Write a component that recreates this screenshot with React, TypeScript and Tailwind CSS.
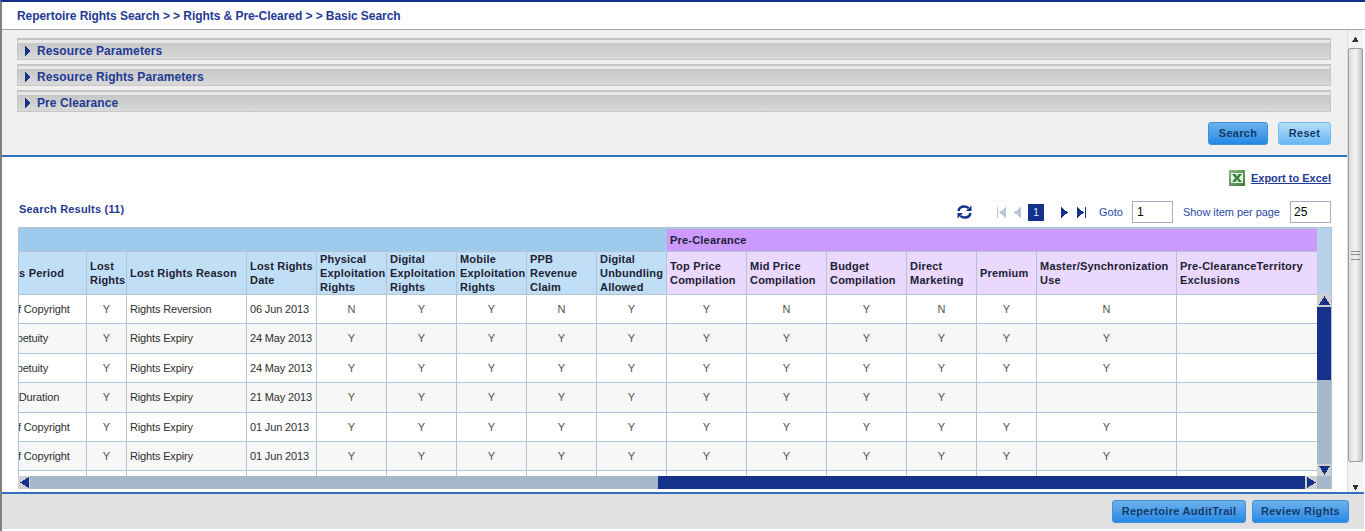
import React from "react";

const navy = "#16318a";

type Row = { period: string; offset: string; reason: string; date: string; a: string[]; b: string[] };

const rows: Row[] = [
  { period: "Life of Copyright", offset: "-ml-[27px]", reason: "Rights Reversion", date: "06 Jun 2013", a: ["N", "Y", "Y", "N", "Y"], b: ["Y", "N", "Y", "N", "Y", "N", ""] },
  { period: "Perpetuity", offset: "-ml-[19px]", reason: "Rights Expiry", date: "24 May 2013", a: ["Y", "Y", "Y", "Y", "Y"], b: ["Y", "Y", "Y", "Y", "Y", "Y", ""] },
  { period: "Perpetuity", offset: "-ml-[19px]", reason: "Rights Expiry", date: "24 May 2013", a: ["Y", "Y", "Y", "Y", "Y"], b: ["Y", "Y", "Y", "Y", "Y", "Y", ""] },
  { period: "Term Duration", offset: "-ml-[27px]", reason: "Rights Expiry", date: "21 May 2013", a: ["Y", "Y", "Y", "Y", "Y"], b: ["Y", "Y", "Y", "Y", "", "", ""] },
  { period: "Life of Copyright", offset: "-ml-[27px]", reason: "Rights Expiry", date: "01 Jun 2013", a: ["Y", "Y", "Y", "Y", "Y"], b: ["Y", "Y", "Y", "Y", "Y", "Y", ""] },
  { period: "Life of Copyright", offset: "-ml-[27px]", reason: "Rights Expiry", date: "01 Jun 2013", a: ["Y", "Y", "Y", "Y", "Y"], b: ["Y", "Y", "Y", "Y", "Y", "Y", ""] },
];

const heights = ["h-[29px]", "h-[30px]", "h-[29px]", "h-[30px]", "h-[29px]", "h-[29px]"];
const widths = [68, 40, 120, 70, 70, 70, 70, 70, 70, 80, 80, 80, 70, 60, 140, 141];

const blueHeads = ["Lost Rights", "Lost Rights Reason", "Lost Rights Date", "Physical Exploitation Rights", "Digital Exploitation Rights", "Mobile Exploitation Rights", "PPB Revenue Claim", "Digital Unbundling Allowed"];
const purpleHeads = ["Top Price Compilation", "Mid Price Compilation", "Budget Compilation", "Direct Marketing", "Premium", "Master/Synchronization Use", "Pre-ClearanceTerritory Exclusions"];

function Tri({ dir, size = 8, color = navy }: { dir: "l" | "r" | "u" | "d"; size?: number; color?: string }) {
  const pts = { r: "1,0 9,5 1,10", l: "9,0 1,5 9,10", u: "0,9 5,1 10,9", d: "0,1 5,9 10,1" }[dir];
  return (
    <svg width={size} height={size} viewBox="0 0 10 10" shapeRendering="crispEdges">
      <polygon points={pts} fill={color} />
    </svg>
  );
}

function Accordion({ title }: { title: string }) {
  return (
    <div className="h-[22px] border border-[#c6c6c6] bg-gradient-to-b from-[#c2c2c2] to-[#d9d9d9] relative flex items-center pl-[7px] pt-[3px]">
      <div className="absolute left-0 right-0 top-[1px] h-[3px] bg-[#e8e8e8]" />
      <svg width="6" height="10" viewBox="0 0 6 10" className="mr-[6px] relative" shapeRendering="crispEdges">
        <polygon points="0,0 6,5 0,10" fill={navy} />
      </svg>
      <span className="text-[12px] font-bold text-[#1f3a94] relative tracking-[0.1px]">{title}</span>
    </div>
  );
}

function BlueButton({ label, light, className }: { label: string; light?: boolean; className: string }) {
  return (
    <button
      className={`h-[23px] rounded-[3px] border text-[11px] font-bold text-[#123a6b] tracking-[0.3px] ${
        light ? "border-[#6fbcf5] bg-gradient-to-b from-[#b4dcfa] to-[#6ab8f3]" : "border-[#3f8fdc] bg-gradient-to-b from-[#6cb2ec] to-[#2288e6]"
      } ${className}`}
    >
      {label}
    </button>
  );
}

function ExcelIcon() {
  return (
    <svg width="16" height="16" viewBox="0 0 16 16" className="mr-[6px]">
      <defs>
        <linearGradient id="xl" x1="0" y1="0" x2="1" y2="1">
          <stop offset="0" stopColor="#8fb886" />
          <stop offset="1" stopColor="#3f7a3c" />
        </linearGradient>
      </defs>
      <rect x="0" y="0" width="16" height="16" fill="url(#xl)" />
      <rect x="2" y="3" width="12" height="10" fill="#e8f2e2" />
      <path d="M3 4h3.5L8 6.5 9.5 4H13l-3.2 4 3.2 4H9.5L8 9.5 6.5 12H3l3.2-4z" fill="#2f8a3a" />
    </svg>
  );
}

function RefreshIcon() {
  return (
    <svg width="15" height="14" viewBox="0 0 15 14" className="mr-[25px]">
      <path d="M1.5 6C2 3 4.5 1.5 7.5 1.5c1.8 0 3 .6 4 1.6" fill="none" stroke={navy} strokeWidth="2.4" />
      <polygon points="14.5,0.5 14.5,6 9,6" fill={navy} />
      <path d="M13.5 8c-.5 3-3 4.5-6 4.5-1.8 0-3-.6-4-1.6" fill="none" stroke={navy} strokeWidth="2.4" />
      <polygon points="0.5,13.5 0.5,8 6,8" fill={navy} />
    </svg>
  );
}

function Pager() {
  return (
    <div className="flex items-center h-[22px] text-[11px] text-[#2a4aa6]">
      <RefreshIcon />
      <svg width="9" height="11" viewBox="0 0 9 11" className="mr-[8px]" shapeRendering="crispEdges">
        <rect x="0" y="0" width="1" height="11" fill="#b9c5dc" />
        <polygon points="9,0 2,5.5 9,11" fill="#b9c5dc" />
      </svg>
      <svg width="7" height="11" viewBox="0 0 7 11" className="mr-[7px]" shapeRendering="crispEdges">
        <polygon points="7,0 0,5.5 7,11" fill="#b9c5dc" />
      </svg>
      <span className="w-[16px] h-[17px] bg-[#16318a] text-[#cfe3ff] text-[11px] flex items-center justify-center mr-[17px]">1</span>
      <svg width="7" height="11" viewBox="0 0 7 11" className="mr-[9px]" shapeRendering="crispEdges">
        <polygon points="0,0 7,5.5 0,11" fill={navy} />
      </svg>
      <svg width="9" height="11" viewBox="0 0 9 11" className="mr-[13px]" shapeRendering="crispEdges">
        <polygon points="0,0 7,5.5 0,11" fill={navy} />
        <rect x="8" y="0" width="1" height="11" fill={navy} />
      </svg>
      <span className="w-[23px] mr-[10px] whitespace-nowrap">Goto</span>
      <div className="w-[41px] h-[22px] border border-[#a8a8c8] text-[12px] text-black pl-[4px] leading-[20px] mr-[10px]">1</div>
      <span className="w-[97px] mr-[10px] whitespace-nowrap tracking-[-0.05px]">Show item per page</span>
      <div className="w-[41px] h-[22px] border border-[#a8a8c8] text-[12px] text-black pl-[3px] leading-[20px]">25</div>
    </div>
  );
}

function ScrollBtn({ dir, className }: { dir: "l" | "r" | "u" | "d"; className: string }) {
  return (
    <div className={`bg-[#cfcfcf] flex items-center justify-center shrink-0 ${className}`}>
      <Tri dir={dir} size={11} />
    </div>
  );
}

function ResultsTable() {
  const th = "border border-[#b2c4d8] text-left align-middle px-[3px] text-[11px] leading-[14px] font-bold text-[#1c2233] tracking-[0.2px]";
  const td = "border border-[#b2c4d8] text-[11px] text-[#2f2f2f] px-[3px] align-middle whitespace-nowrap tracking-[-0.15px]";
  const mark = "border border-[#b2c4d8] text-[11px] text-[#555] text-center align-middle";
  return (
    <div className="ml-[16px] w-[1314px] flex border-t border-r border-[#b2c4d8]">
      <div className="w-[1299px] flex flex-col">
        <div className="h-[248px] overflow-hidden">
          <table className="table-fixed border-collapse w-[1299px]">
            <colgroup>
              {widths.map((w, i) => (
                <col key={i} style={{ width: w }} />
              ))}
            </colgroup>
            <thead>
              <tr className="h-[23px]">
                <th colSpan={9} className="bg-[#9ccbee] border border-[#b2c4d8]" />
                <th colSpan={7} className={`${th} bg-[#cc99ff]`}>Pre-Clearance</th>
              </tr>
              <tr className="h-[43px]">
                <th className={`${th} bg-[#c0dff6] !px-0 overflow-hidden whitespace-nowrap`}>
                  <span className="block -ml-[29px]">Rights Period</span>
                </th>
                {blueHeads.map((h) => (
                  <th key={h} className={`${th} bg-[#c0dff6]`}>{h}</th>
                ))}
                {purpleHeads.map((h) => (
                  <th key={h} className={`${th} bg-[#ead8ff]`}>{h}</th>
                ))}
              </tr>
            </thead>
            <tbody>
              {rows.map((r, i) => (
                <tr key={i} className={`${heights[i]} ${i % 2 ? "bg-[#f7f7f7]" : "bg-white"}`}>
                  <td className={`${td} !px-0 overflow-hidden`}>
                    <span className={`block ${r.offset}`}>{r.period}</span>
                  </td>
                  <td className={mark}>Y</td>
                  <td className={td}>{r.reason}</td>
                  <td className={td}>{r.date}</td>
                  {r.a.map((v, j) => (
                    <td key={j} className={mark}>{v}</td>
                  ))}
                  {r.b.map((v, j) => (
                    <td key={j} className={mark}>{v}</td>
                  ))}
                </tr>
              ))}
              <tr className="h-[29px] bg-white">
                {widths.map((_, i) => (
                  <td key={i} className="border border-[#b2c4d8]" />
                ))}
              </tr>
            </tbody>
          </table>
        </div>
        <div className="h-[13px] flex bg-[#a5b7c9]">
          <ScrollBtn dir="l" className="w-[12px]" />
          <div className="w-[628px]" />
          <div className="w-[647px] bg-[#16318a]" />
          <ScrollBtn dir="r" className="w-[12px]" />
        </div>
      </div>
      <div className="w-[14px] flex flex-col bg-[#a5b7c9]">
        <div className="h-[66px] bg-[#b8d0e8] shrink-0" />
        <ScrollBtn dir="u" className="h-[13px]" />
        <div className="h-[73px] bg-[#16318a] shrink-0" />
        <div className="h-[84px] shrink-0" />
        <ScrollBtn dir="d" className="h-[12px]" />
      </div>
    </div>
  );
}

function PageScrollbar() {
  return (
    <div className="w-[16px] h-full bg-[#f1f1f1] border-l border-[#dcdcdc] flex flex-col items-center">
      <div className="h-[18px] flex items-center justify-center shrink-0">
        <Tri dir="u" size={7} color="#333" />
      </div>
      <div className="w-[15px] h-[414px] rounded-[2px] border border-[#9c9c9c] bg-gradient-to-r from-[#dcdcdc] via-[#f4f4f4] to-[#c4c4c4] flex items-center justify-center shrink-0">
        <div className="w-[9px] h-[9px] border-t border-b border-[#8a8a8a] flex items-center">
          <div className="w-full h-[3px] border-t border-[#8a8a8a]" />
        </div>
      </div>
      <div className="flex-1 flex items-center justify-center pt-[20px]">
        <Tri dir="d" size={7} color="#333" />
      </div>
    </div>
  );
}

export default function App() {
  return (
    <div className="w-[1365px] h-[531px] overflow-hidden bg-white border-t-2 border-l-2 border-t-[#16318a] border-l-[#7f7f7f] flex flex-col font-['Liberation_Sans',Arial,sans-serif]">
      <div className="h-[28px] shrink-0 border-b border-[#a5a5a5] pl-[15px] flex items-center text-[12px] tracking-[-0.06px] text-[#1f3a94] font-bold">
        Repertoire Rights Search &gt; &gt; Rights &amp; Pre-Cleared &gt; &gt; Basic Search
      </div>
      <div className="h-[462px] shrink-0 flex">
        <div className="w-[1345px] flex flex-col">
          <div className="h-[127px] shrink-0 bg-[#f0f0f0] border-b-2 border-[#2f6fbd] pt-[8px] pl-[15px] pr-[16px] flex flex-col gap-[4px]">
            <Accordion title="Resource Parameters" />
            <Accordion title="Resource Rights Parameters" />
            <Accordion title="Pre Clearance" />
            <div className="flex justify-end gap-[10px] mt-[6px]">
              <BlueButton label="Search" className="w-[60px]" />
              <BlueButton label="Reset" light className="w-[53px]" />
            </div>
          </div>
          <div className="flex-1 min-h-0 flex flex-col pt-[13px]">
            <div className="flex justify-end items-center pr-[16px] h-[16px]">
              <ExcelIcon />
              <span className="text-[11px] font-bold text-[#1f3a94] underline">Export to Excel</span>
            </div>
            <div className="flex justify-between items-center mt-[15px] mb-[4px] pl-[17px] pr-[16px]">
              <span className="text-[11px] font-bold text-[#1f3a94] tracking-[0.2px] -mt-[6px]">Search Results (11)</span>
              <Pager />
            </div>
            <ResultsTable />
          </div>
        </div>
        <PageScrollbar />
      </div>
      <div className="h-[37px] shrink-0 border-t-2 border-[#2f6fbd] bg-[#e1e1e1] flex justify-end gap-[6px] pt-[6px] pr-[15px] mr-[1px]">
        <BlueButton label="Repertoire AuditTrail" className="w-[134px]" />
        <BlueButton label="Review Rights" className="w-[97px]" />
      </div>
    </div>
  );
}
